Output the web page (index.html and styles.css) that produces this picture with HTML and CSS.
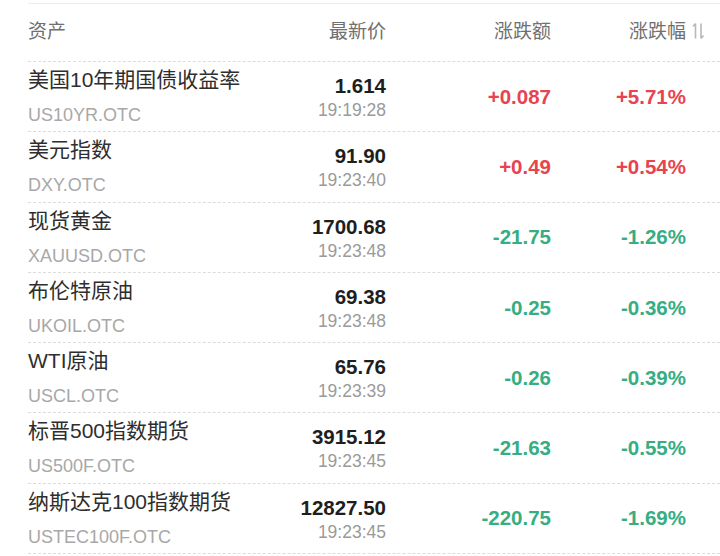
FILE: index.html
```html
<!DOCTYPE html>
<html lang="zh-CN">
<head>
<meta charset="utf-8">
<title>行情</title>
<link rel="stylesheet" href="styles.css">
</head>
<body>
<div class="table">
  <div class="row head">
    <div class="c-name">资产</div>
    <div class="c-price">最新价</div>
    <div class="c-chg">涨跌额</div>
    <div class="c-pct">涨跌幅<svg class="sort" width="13" height="18" viewBox="0 0 13 18"><path d="M3.5 1.5V16.5M3.5 1.5L1 4.5M9 1.5V16.5M9 16.5L11.5 13.5" fill="none" stroke="#b8b8b8" stroke-width="1.6"/></svg></div>
  </div>
  <div class="row">
    <div class="c-name"><div class="name">美国10年期国债收益率</div><div class="code">US10YR.OTC</div></div>
    <div class="c-price"><div class="price">1.614</div><div class="time">19:19:28</div></div>
    <div class="c-chg up">+0.087</div>
    <div class="c-pct up">+5.71%</div>
  </div>
  <div class="row">
    <div class="c-name"><div class="name">美元指数</div><div class="code">DXY.OTC</div></div>
    <div class="c-price"><div class="price">91.90</div><div class="time">19:23:40</div></div>
    <div class="c-chg up">+0.49</div>
    <div class="c-pct up">+0.54%</div>
  </div>
  <div class="row">
    <div class="c-name"><div class="name">现货黄金</div><div class="code">XAUUSD.OTC</div></div>
    <div class="c-price"><div class="price">1700.68</div><div class="time">19:23:48</div></div>
    <div class="c-chg down">-21.75</div>
    <div class="c-pct down">-1.26%</div>
  </div>
  <div class="row">
    <div class="c-name"><div class="name">布伦特原油</div><div class="code">UKOIL.OTC</div></div>
    <div class="c-price"><div class="price">69.38</div><div class="time">19:23:48</div></div>
    <div class="c-chg down">-0.25</div>
    <div class="c-pct down">-0.36%</div>
  </div>
  <div class="row">
    <div class="c-name"><div class="name">WTI原油</div><div class="code">USCL.OTC</div></div>
    <div class="c-price"><div class="price">65.76</div><div class="time">19:23:39</div></div>
    <div class="c-chg down">-0.26</div>
    <div class="c-pct down">-0.39%</div>
  </div>
  <div class="row">
    <div class="c-name"><div class="name">标晋500指数期货</div><div class="code">US500F.OTC</div></div>
    <div class="c-price"><div class="price">3915.12</div><div class="time">19:23:45</div></div>
    <div class="c-chg down">-21.63</div>
    <div class="c-pct down">-0.55%</div>
  </div>
  <div class="row">
    <div class="c-name"><div class="name">纳斯达克100指数期货</div><div class="code">USTEC100F.OTC</div></div>
    <div class="c-price"><div class="price">12827.50</div><div class="time">19:23:45</div></div>
    <div class="c-chg down">-220.75</div>
    <div class="c-pct down">-1.69%</div>
  </div>
</div>
</body>
</html>
```
FILE: styles.css
```css
html, body {
  margin: 0;
  padding: 0;
  background: #fff;
}
body {
  font-family: "Liberation Sans", "Noto Sans CJK SC", sans-serif;
  color: #333;
  padding-top: 3px;
}
.table {
  margin-left: 28px;
  border-top: 1px solid #ececec;
}
.row {
  display: grid;
  grid-template-columns: minmax(0, 1fr) 160px 165px 135px;
  padding-right: 34px;
  border-bottom: 1px dashed #dcdcdc;
  box-sizing: border-box;
  height: 70.3px;
}
.row.head {
  height: 58px;
  align-items: center;
  padding-bottom: 6px;
  font-size: 19px;
  color: #707070;
}
.head .c-name {
  padding-top: 0;
}
.head .c-price, .head .c-chg, .head .c-pct {
  text-align: right;
  padding-top: 0;
}
.sort {
  vertical-align: -2px;
  margin-left: 6px;
  margin-right: -19px;
}
.c-name {
  padding-top: 5px;
}
.name {
  font-size: 21px;
  line-height: 26px;
  color: #2e2e2e;
  white-space: nowrap;
}
.code {
  font-size: 18px;
  line-height: 28px;
  margin-top: 8px;
  color: #a8a8a8;
}
.c-price {
  text-align: right;
  padding-top: 12px;
}
.price {
  font-size: 20.5px;
  font-weight: bold;
  line-height: 24px;
  color: #1e1e1e;
}
.time {
  font-size: 17.5px;
  line-height: 24px;
  color: #9a9a9a;
}
.row:not(.head) .c-chg, .row:not(.head) .c-pct {
  text-align: right;
  align-self: center;
  font-size: 20.5px;
  font-weight: bold;
  line-height: 26px;
}
.up { color: #e8434f; }
.down { color: #36ad82; }
```
